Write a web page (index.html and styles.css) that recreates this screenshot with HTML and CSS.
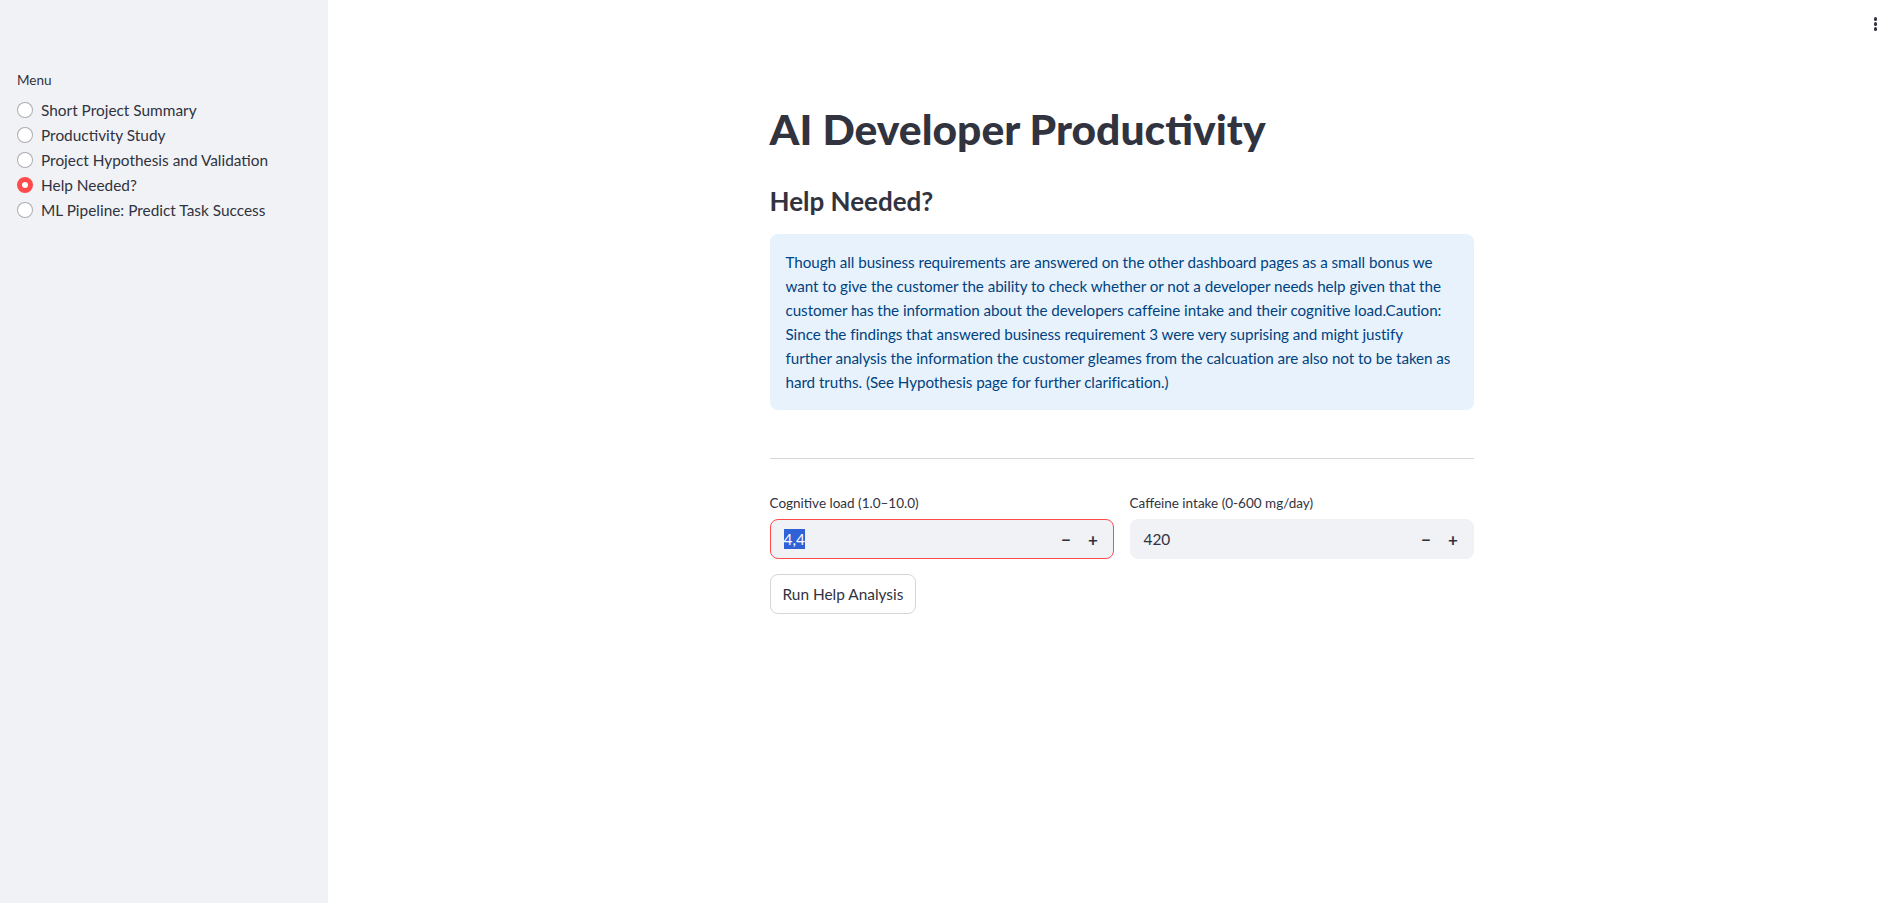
FILE: index.html
```html
<!DOCTYPE html>
<html lang="en">
<head>
<meta charset="utf-8">
<title>AI Developer Productivity</title>
<link rel="stylesheet" href="styles.css">
</head>
<body>
<aside class="sidebar">
  <div class="menu-label">Menu</div>
  <div class="radio-group">
    <label class="radio"><span class="dot"></span><span class="radio-text">Short Project Summary</span></label>
    <label class="radio"><span class="dot"></span><span class="radio-text">Productivity Study</span></label>
    <label class="radio"><span class="dot"></span><span class="radio-text">Project Hypothesis and Validation</span></label>
    <label class="radio checked"><span class="dot"></span><span class="radio-text">Help Needed?</span></label>
    <label class="radio"><span class="dot"></span><span class="radio-text">ML Pipeline: Predict Task Success</span></label>
  </div>
</aside>
<main class="main">
  <div class="kebab"><span></span><span></span><span></span></div>
  <div class="block">
    <h1 class="title">AI Developer Productivity</h1>
    <h3 class="subheader">Help Needed?</h3>
    <div class="callout">Though all business requirements are answered on the other dashboard pages as a small bonus we want to give the customer the ability to check whether or not a developer needs help given that the customer has the information about the developers caffeine intake and their cognitive load.Caution: Since the findings that answered business requirement 3 were very suprising and might justify<br>further analysis the information the customer gleames from the calcuation are also not to be taken as hard truths. (See Hypothesis page for further clarification.)</div>
    <hr class="divider">
    <div class="columns">
      <div class="field">
        <div class="field-label">Cognitive load (1.0–10.0)</div>
        <div class="number-input focused">
          <span class="value"><span class="selected">4,4</span></span>
          <span class="step">−</span><span class="step">+</span>
        </div>
      </div>
      <div class="field">
        <div class="field-label">Caffeine intake (0-600 mg/day)</div>
        <div class="number-input">
          <span class="value">420</span>
          <span class="step">−</span><span class="step">+</span>
        </div>
      </div>
    </div>
    <button class="btn">Run Help Analysis</button>
  </div>
</main>
</body>
</html>
```
FILE: styles.css
```css
* { box-sizing: border-box; }
html, body { margin: 0; padding: 0; }
body {
  display: flex;
  width: 1903px;
  height: 903px;
  overflow: hidden;
  font-family: "Lato", "Liberation Sans", sans-serif;
  color: #31333f;
  background: #ffffff;
}
.sidebar {
  width: 328px;
  flex: 0 0 328px;
  background: #f0f2f6;
  padding: 71px 16px 0 17px;
}
.menu-label {
  font-size: 13.5px;
  line-height: 18px;
  color: #31333f;
  margin-bottom: 8px;
}
.radio-group { display: flex; flex-direction: column; }
.radio {
  display: flex;
  align-items: center;
  height: 25.2px;
  font-size: 15.4px;
}
.dot {
  width: 16px;
  height: 16px;
  border-radius: 50%;
  border: 1px solid rgba(49, 51, 63, 0.4);
  background: #ffffff;
  margin-right: 8px;
  flex: 0 0 16px;
}
.radio.checked .dot {
  background: #ff4b4b;
  border: 5px solid #ff4b4b;
  position: relative;
}
.radio.checked .dot::after {
  content: "";
  position: absolute;
  inset: 0;
  border-radius: 50%;
  background: #ffffff;
}
.main {
  flex: 1;
  position: relative;
  padding-left: 12px;
}
.kebab {
  position: absolute;
  top: 17px;
  right: 26px;
  display: flex;
  flex-direction: column;
  gap: 1.5px;
}
.kebab span {
  width: 3.5px;
  height: 3.5px;
  border-radius: 50%;
  background: #31333f;
}
.block {
  width: 704px;
  margin: 0 auto;
  padding-top: 101px;
}
.title {
  margin: 0;
  font-size: 42.6px;
  font-weight: 900;
  line-height: 56px;
}
.subheader {
  margin: 26px 0 0;
  font-size: 26px;
  font-weight: 700;
  line-height: 36px;
}
.callout {
  margin-top: 15px;
  background: #e8f2fc;
  color: #004280;
  border-radius: 8px;
  padding: 16px;
  font-size: 15.2px;
  line-height: 24px;
  letter-spacing: -0.05px;
}
.divider {
  border: 0;
  border-top: 1px solid #d6d6d9;
  margin: 48px 0 0;
  height: 0;
}
.columns {
  display: grid;
  grid-template-columns: 1fr 1fr;
  gap: 16px;
  margin-top: 34px;
}
.field-label {
  font-size: 13.5px;
  line-height: 20px;
  margin-bottom: 6px;
}
.number-input {
  display: flex;
  align-items: center;
  height: 40px;
  background: #f0f2f6;
  border: 1px solid #f0f2f6;
  border-radius: 8px;
  padding: 0 6px 0 13px;
  font-size: 15.4px;
}
.number-input.focused { border-color: #ff4b4b; }
.value { flex: 1; }
.selected {
  background: #2f62d6;
  color: #ffffff;
  padding: 1px 0;
}
.step {
  width: 27px;
  text-align: center;
  font-size: 17px;
  font-weight: 700;
}
.btn {
  margin-top: 15px;
  height: 40px;
  padding: 0 12px;
  border: 1px solid #d6d6d9;
  border-radius: 8px;
  background: #ffffff;
  color: #31333f;
  font-family: inherit;
  font-size: 15.4px;
}
```
